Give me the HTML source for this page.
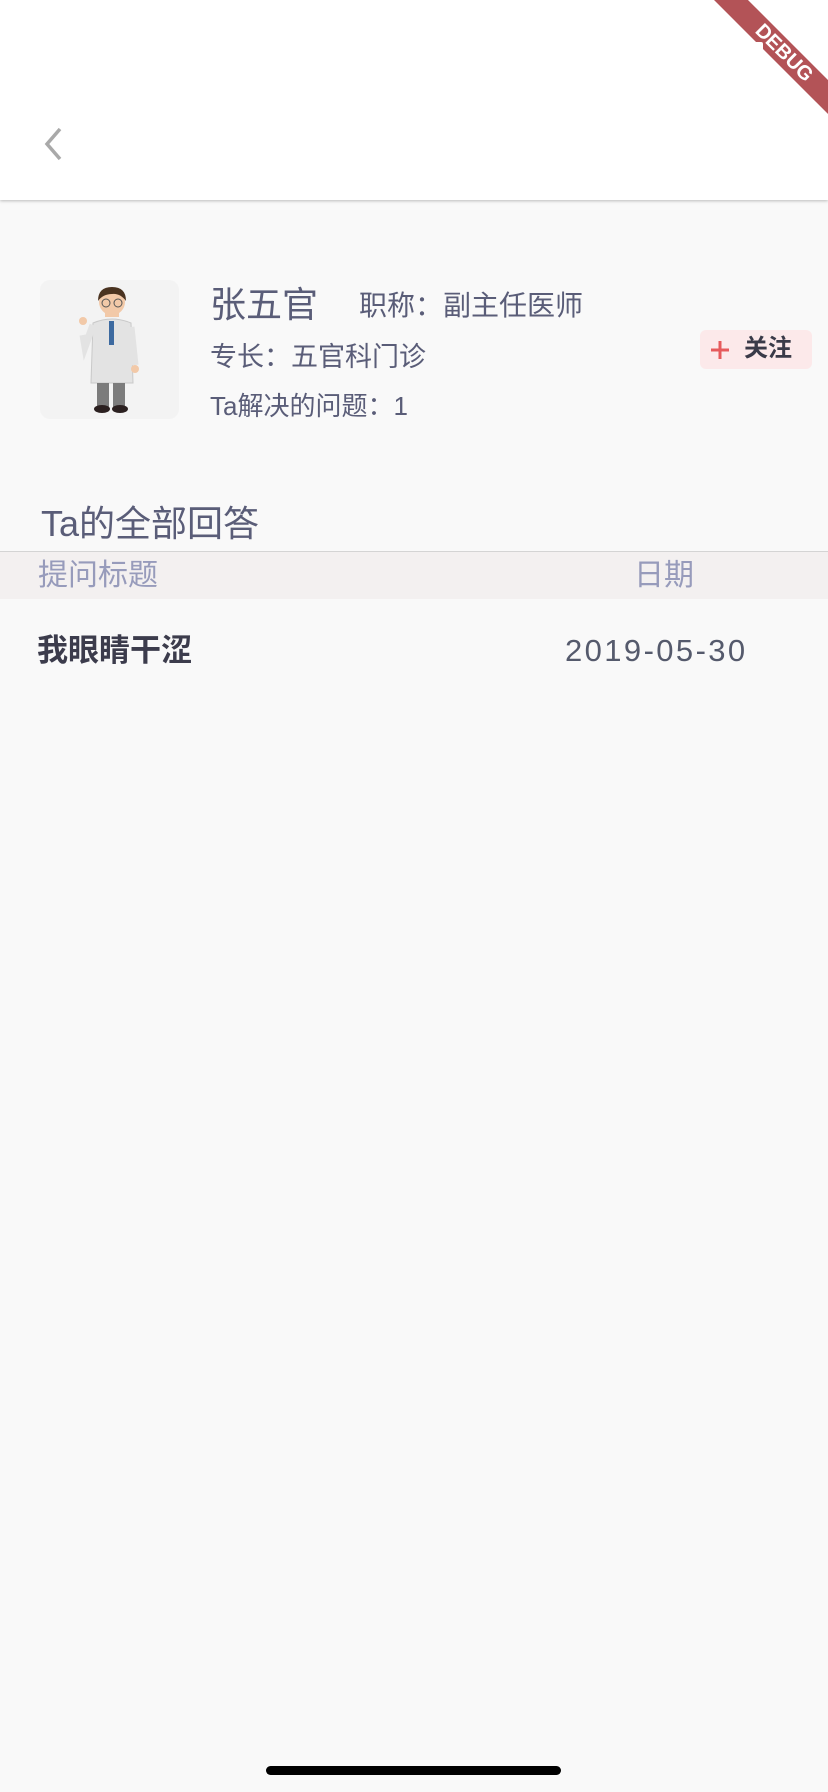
<!DOCTYPE html>
<html><head><meta charset="utf-8"><style>
html,body{margin:0;padding:0}
body{width:828px;height:1792px;background:#f9f9f9;position:relative;overflow:hidden;font-family:"Liberation Sans","Noto Sans CJK SC",sans-serif}
.bar{position:absolute;left:0;top:0;width:828px;height:200px;background:#fff;box-shadow:0 1px 3px rgba(0,0,0,.25)}
.t{position:absolute;white-space:nowrap;line-height:1}
.banner{position:absolute;left:684px;top:41px;width:200px;height:24px;background:rgba(160,40,45,.8);transform:rotate(45deg);color:#fff;font-weight:bold;font-size:20px;line-height:24px;text-align:center}
</style></head><body>
<div class="bar"></div>
<svg style="position:absolute;left:40px;top:126px" width="30" height="36" viewBox="0 0 30 36"><path d="M20 3 L7 18 L20 33" fill="none" stroke="#a9a9a9" stroke-width="3.5"/></svg>
<div class="banner">DEBUG</div>
<div style="position:absolute;left:744px;top:42px;width:19px;height:15px;background:#fff;border-radius:2px"></div>

<div style="position:absolute;left:40px;top:280px;width:139px;height:139px;background:#f3f3f3;border-radius:10px"></div>
<svg style="position:absolute;left:75px;top:285px" width="70" height="130" viewBox="0 0 70 130">
<path d="M30 22 h14 v10 h-14z" fill="#f2c9a8"/>
<path d="M18 38 Q37 30 56 38 L58 98 H16z" fill="#e3e3e3" stroke="#c9c9c9"/>
<rect x="34" y="36" width="5" height="24" fill="#3d6aa0"/>
<path d="M18 40 L10 62 L8 50" fill="none" stroke="#e3e3e3" stroke-width="7"/>
<circle cx="8" cy="36" r="4" fill="#f2c9a8"/>
<path d="M56 42 L60 80" stroke="#e3e3e3" stroke-width="7"/>
<circle cx="60" cy="84" r="4" fill="#f2c9a8"/>
<rect x="22" y="98" width="12" height="24" fill="#7c7c7c"/><rect x="38" y="98" width="12" height="24" fill="#7c7c7c"/>
<ellipse cx="27" cy="124" rx="8" ry="4" fill="#2b2020"/><ellipse cx="45" cy="124" rx="8" ry="4" fill="#2b2020"/>
<circle cx="37" cy="17" r="13" fill="#f2c9a8"/>
<path d="M23 16 Q23 2 37 2 Q51 2 51 16 Q45 8 37 9 Q28 9 23 16z" fill="#4a3320"/>
<circle cx="31" cy="18" r="4" fill="none" stroke="#555"/><circle cx="43" cy="18" r="4" fill="none" stroke="#555"/>
</svg>

<div class="t" style="left:210px;top:287px;font-size:36px;color:#5a5d78">张五官</div>
<div class="t" style="left:359px;top:292px;font-size:28px;color:#5a5d78">职称：副主任医师</div>
<div class="t" style="left:210px;top:344px;font-size:27px;color:#5a5d78">专长：五官科门诊</div>
<div class="t" style="left:210px;top:393px;font-size:26px;color:#5a5d78">Ta解决的问题：1</div>

<div style="position:absolute;left:700px;top:330px;width:112px;height:39px;background:#fce9ea;border-radius:6px"></div>
<svg style="position:absolute;left:710px;top:340px" width="20" height="20" viewBox="0 0 20 20"><path d="M10 1V19M1 10H19" stroke="#e65a5c" stroke-width="3"/></svg>
<div class="t" style="left:744px;top:337px;font-size:24px;color:#3a3a48;font-weight:bold">关注</div>

<div class="t" style="left:41px;top:506px;font-size:36px;color:#5a5d78">Ta的全部回答</div>
<div style="position:absolute;left:0;top:551px;width:828px;height:1px;background:#d4d4d4"></div>
<div style="position:absolute;left:0;top:552px;width:828px;height:47px;background:#f3f0f0"></div>
<div class="t" style="left:38px;top:561px;font-size:30px;color:#979bbb">提问标题</div>
<div class="t" style="left:634px;top:561px;font-size:30px;color:#979bbb">日期</div>

<div class="t" style="left:37px;top:635px;font-size:31px;color:#3c3c4c;font-weight:bold">我眼睛干涩</div>
<div class="t" style="left:565px;top:635px;font-size:31px;color:#555a6c;letter-spacing:2.4px">2019-05-30</div>

<div style="position:absolute;left:266px;top:1766px;width:295px;height:9px;background:#000;border-radius:5px"></div>
</body></html>
